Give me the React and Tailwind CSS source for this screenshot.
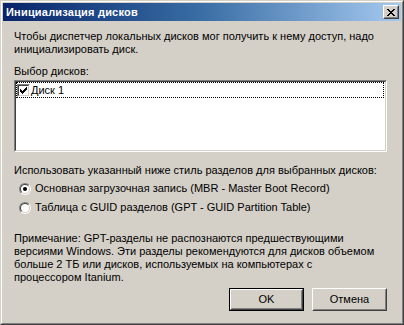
import React from "react";

function CloseGlyph() {
  // classic 8x7 close cross
  const rows = ["11000011", "01100110", "00111100", "00011000", "00111100", "01100110", "11000011"];
  return (
    <svg width="8" height="7" viewBox="0 0 8 7" shapeRendering="crispEdges">
      {rows.map((r, y) =>
        r.split("").map((c, x) => (c === "1" ? <rect key={`${x}-${y}`} x={x} y={y} width="1" height="1" fill="#000" /> : null))
      )}
    </svg>
  );
}

function CheckGlyph() {
  const rows = ["0000001", "0000011", "1000111", "1101110", "1111100", "0111000", "0010000"];
  return (
    <svg width="7" height="7" viewBox="0 0 7 7" shapeRendering="crispEdges">
      {rows.map((r, y) =>
        r.split("").map((c, x) => (c === "1" ? <rect key={`${x}-${y}`} x={x} y={y} width="1" height="1" fill="#000" /> : null))
      )}
    </svg>
  );
}

function Radio({ checked, label }) {
  return (
    <div className="flex items-center h-[19px] pl-[5px] gap-[4px]">
      <div className="w-[12px] h-[12px] rounded-full border border-t-[#808080] border-l-[#808080] border-r-white border-b-white">
        <div className="w-full h-full rounded-full border border-t-[#404040] border-l-[#404040] border-r-[#d4d0c8] border-b-[#d4d0c8] bg-white flex items-center justify-center">
          {checked && <div className="w-[4px] h-[4px] rounded-full bg-black" />}
        </div>
      </div>
      <span>{label}</span>
    </div>
  );
}

function Button({ children, isDefault }) {
  const face = (
    <div className="w-full h-full border border-t-white border-l-white border-r-[#404040] border-b-[#404040]">
      <div className="w-full h-full border border-t-[#d4d0c8] border-l-[#d4d0c8] border-r-[#808080] border-b-[#808080] flex items-center justify-center">
        {children}
      </div>
    </div>
  );
  return (
    <div className="w-[75px] h-[23px] bg-[#d4d0c8]">
      {isDefault ? <div className="w-full h-full border border-black">{face}</div> : face}
    </div>
  );
}

export default function App() {
  return (
    <div className="w-[404px] h-[325px] bg-[#d4d0c8] font-['Liberation_Sans',Arial,sans-serif] text-[11px] leading-[13px] text-black select-none">
      <div className="h-full border border-t-[#d4d0c8] border-l-[#d4d0c8] border-r-[#404040] border-b-[#404040]">
        <div className="h-full flex flex-col border border-t-white border-l-white border-r-[#808080] border-b-[#808080] p-px">
          {/* title bar */}
          <div className="h-[18px] flex items-center justify-between pl-[3px] pr-[2px] bg-gradient-to-r from-[#0a246a] via-[#3a6ea5] to-[#a6caf0]">
            <span className="text-white font-bold tracking-[0.2px]">Инициализация дисков</span>
            <div className="w-[16px] h-[14px] bg-[#d4d0c8] border border-t-white border-l-white border-r-[#404040] border-b-[#404040]">
              <div className="w-full h-full border border-t-[#d4d0c8] border-l-[#d4d0c8] border-r-[#808080] border-b-[#808080] flex items-center justify-center">
                <CloseGlyph />
              </div>
            </div>
          </div>

          {/* body */}
          <div className="flex-1 flex flex-col pl-[11px] pr-[14px] pt-[9px]">
            <p className="whitespace-nowrap">
              Чтобы диспетчер локальных дисков мог получить к нему доступ, надо
              <br />
              инициализировать диск.
            </p>

            <div className="mt-[9px]">Выбор дисков:</div>

            <div className="mt-[2px] h-[72px] bg-white border border-t-[#808080] border-l-[#808080] border-r-white border-b-white">
              <div className="h-full border border-t-[#404040] border-l-[#404040] border-r-[#d4d0c8] border-b-[#d4d0c8]">
                <div className="h-[16px] mr-px border border-dotted border-black flex items-center gap-px">
                  <div className="w-[13px] h-[13px] border border-t-[#808080] border-l-[#808080] border-r-white border-b-white">
                    <div className="w-full h-full border border-t-[#404040] border-l-[#404040] border-r-[#d4d0c8] border-b-[#d4d0c8] bg-white flex items-center justify-center">
                      <CheckGlyph />
                    </div>
                  </div>
                  <span>Диск 1</span>
                </div>
              </div>
            </div>

            <div className="mt-[12px]">Использовать указанный ниже стиль разделов для выбранных дисков:</div>

            <div className="mt-[2px] flex flex-col">
              <Radio checked label="Основная загрузочная запись (MBR - Master Boot Record)" />
              <Radio label="Таблица с GUID разделов (GPT - GUID Partition Table)" />
            </div>

            <p className="mt-[15px] whitespace-nowrap">
              Примечание: GPT-разделы не распознаются предшествующими
              <br />
              версиями Windows. Эти разделы рекомендуются для дисков объемом
              <br />
              больше 2 ТБ или дисков, используемых на компьютерах с
              <br />
              процессором Itanium.
            </p>

            <div className="mt-[4px] flex justify-end gap-[8px]">
              <Button isDefault>OK</Button>
              <Button>Отмена</Button>
            </div>
          </div>
        </div>
      </div>
    </div>
  );
}
